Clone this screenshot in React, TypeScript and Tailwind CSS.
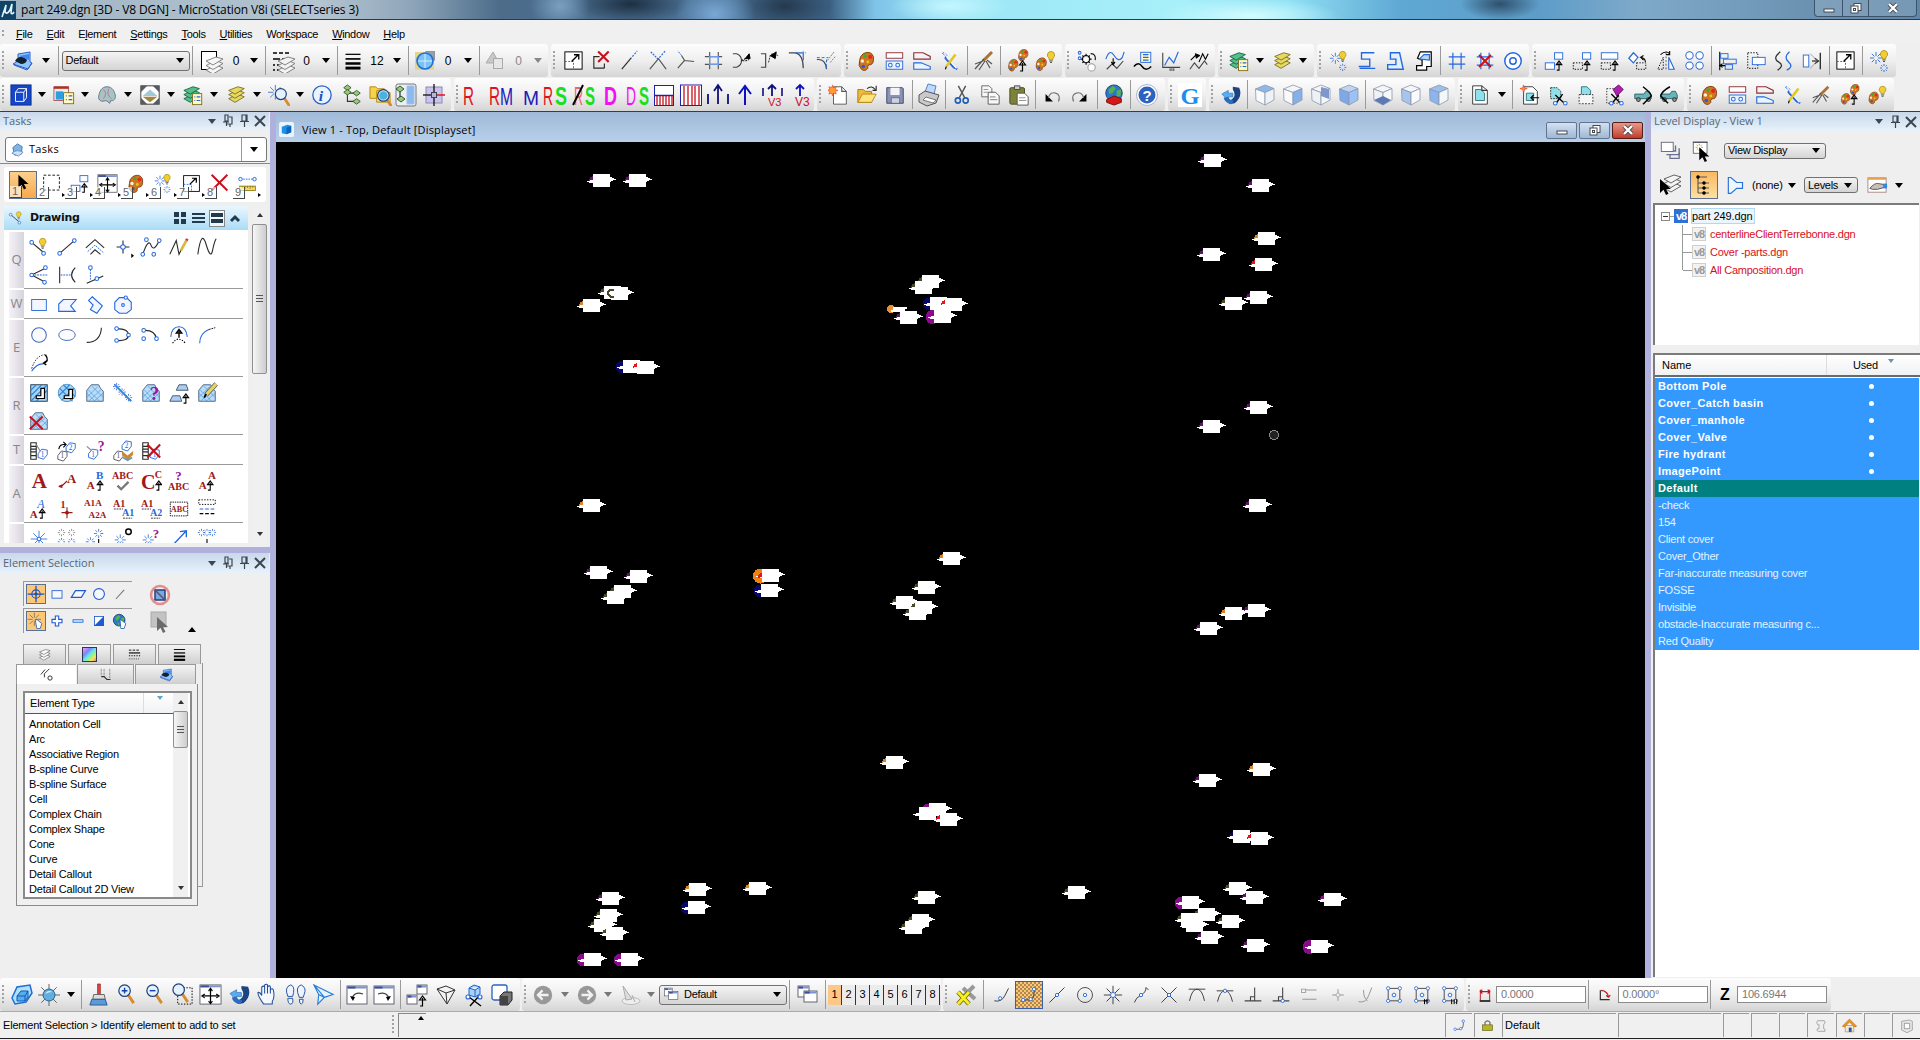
import React from "react";

const K = "#2b2b2b";
const B = "#2468dc";
const R = "#c8101c";
const N = "#000";
const Y = "#e8d860";

const l = (d: string, c = K, w = 1.2, f = "none", dash?: string) => (
  <path d={d} stroke={c} strokeWidth={w} fill={f} strokeDasharray={dash} />
);
const o = (x: number, y: number, r = 2, c = B, f = "#fff", w = 1.1) => (
  <circle cx={x} cy={y} r={r} stroke={c} fill={f} strokeWidth={w} />
);
const t = (s: string, x: number, y: number, c: string, size = 9, family = "Liberation Serif", w = "bold") => (
  <text x={x} y={y} fill={c} fontSize={size} fontFamily={`"${family}", serif`} fontWeight={w}>
    {s}
  </text>
);
const tall = (s: string, x: number, w: number, c: string, weight = "normal", size = 25) => (
  <text x={x} y="21.500" fill={c} fontSize={size} fontWeight={weight} fontFamily='"Liberation Sans", sans-serif' textLength={w} lengthAdjust="spacingAndGlyphs">
    {s}
  </text>
);

const bulb = (x: number, y: number) => (
  <g transform={`translate(${x} ${y})`}>
    <path d="M0-4.5a3.6 3.6 0 0 1 2 6.6L1.6 4h-3.2L-2 2.1A3.6 3.6 0 0 1 0-4.5z" fill="#f2cf2e" stroke="#a58a1c" strokeWidth=".8" />
    <path d="M-1.6 5h3.2M-1 6.5h2" stroke="#555" />
  </g>
);
const paint = (x: number, y: number, s = 1) => (
  <g transform={`translate(${x} ${y}) scale(${s})`}>
    <path d="M-3-8Q5-12 8-5 9 3 5 4 1 4 2 8-1 12-5 9-9 5-7 0-7-5-3-8z" fill="#cf7420" stroke="#7c3c0c" />
    <circle cx="-4" cy="0" r="1.900" fill="#fff3d8" />
    <circle cx="-1" cy="-5.500" r="1.900" fill="#35b035" />
    <circle cx="4.500" cy="-4.500" r="2.200" fill="#e22a1c" />
    <circle cx="-3" cy="6" r="2" fill="#2f58d8" />
    <circle cx="2" cy="1" r="1.600" fill="#e9c520" />
  </g>
);
const burst = (x: number, y: number, r = 6, c = B, w = 0.9) => (
  <path
    transform={`translate(${x} ${y})`}
    d={`M0-${r}V-2M0 2V${r}M-${r} 0H-2M2 0H${r}M-${r * 0.7}-${r * 0.7}L-1.500-1.500M${r * 0.7} ${r * 0.7}L1.500 1.500M${r * 0.7}-${r * 0.7}L1.500-1.500M-${r * 0.7} ${r * 0.7}L-1.500 1.500`}
    stroke={c}
    strokeWidth={w}
  />
);
const pages = (x: number, y: number, c: string, s = "#6b6420") => (
  <g transform={`translate(${x} ${y})`} stroke={s} fill={c} strokeWidth=".9">
    <path d="M0 13l7 4 10-6-7-3z" />
    <path d="M0 8.500l7 4 10-6-7-3z" />
    <path d="M0 4l7 4L17 2 10 0z" />
  </g>
);
const redX = (x: number, y: number, r = 6) => l(`M${x - r} ${y - r}L${x + r} ${y + r}M${x + r} ${y - r}L${x - r} ${y + r}`, R, 2.2);
const cube = (a: string, b: string, c: string) => (
  <g stroke="#8b97a8" strokeWidth=".8">
    <path d="M2.500 6L12 2l9 3.500-9 4z" fill={a} />
    <path d="M2.500 6L12 9.500V22L3 17.500z" fill={b} />
    <path d="M12 9.500l9-4V17l-9 5z" fill={c} />
  </g>
);
const hatch = (
  <>
    <path d="M3 21V9l5-6h8l2 4 3 3v11z" fill="#b9dcf7" stroke="#46617e" />
    <path d="M3 12l9 9M4 8l13 13M8 4l13 13M3 17l12-12M5 21L19 8M11 21l10-9" stroke="#4d93da" strokeWidth=".7" />
  </>
);
const cursor = (x: number, y: number, c = N) => (
  <path transform={`translate(${x} ${y})`} d="M0 0v14l3.500-3.200L6 16l2.500-1.200L6 10h5z" fill={c} />
);
const win = (x: number, y: number, w: number, h: number) => (
  <g>
    <rect x={x} y={y} width={w} height={h} fill="#fff" stroke="#556" strokeWidth=".9" />
    <rect x={x + 0.5} y={y + 0.5} width={w - 1} height="2" fill="#7f92cc" />
    <rect x={x + 0.5} y={y + 0.5} width={w * 0.4} height="2" fill="#3c4f94" />
  </g>
);
const lens = (x: number, y: number, s: string) => (
  <g transform={`translate(${x} ${y})`}>
    <path d="M3.500 4l6 9" stroke="#d98a2b" strokeWidth="3" />
    <circle r="6" fill="#e4f2ff" stroke="#23407c" strokeWidth="1.300" />
    <path d={s} stroke="#1240b0" strokeWidth="1.500" />
  </g>
);
const box = (x: number, y: number, w: number, h: number, c = B, dash?: string, f = "none") => (
  <rect x={x} y={y} width={w} height={h} stroke={c} fill={f} strokeDasharray={dash} />
);
const upArrow = (x: number, y: number) => (
  <path transform={`translate(${x} ${y})`} d="M-3 9h2.500V1M-3.500 3l3-4 3 4z" stroke={N} strokeWidth="1.200" fill="none" />
);
const globe = (x: number, y: number, r: number) => (
  <g>
    <circle cx={x} cy={y} r={r} fill="#2a78cc" stroke="#1d3f70" />
    <path transform={`translate(${x} ${y}) scale(${r / 9})`} d="M-6-4L-1-8l3 3-4 5-3 1zM3-3l5-1-1 7-4 1zM-3 3l4 2-2 4z" fill="#55b14a" />
  </g>
);
const tag = (x: number, y: number, c: string, s: string) => (
  <g transform={`translate(${x} ${y})`}>
    <path d="M-5 0l4-5 6 1v5l-4 5-6-2z" fill="#fff" stroke={c} />
    <text x="-2" y="3" fontSize="8" fill={c} fontFamily="Liberation Serif">{s}</text>
  </g>
);
const truck = (
  <>
    <path d="M3 11h10l2-3h4l2 4v4H3z" fill="#67b5b8" stroke="#28656c" />
    {o(7, 17, 2, "#333", "#999")}
    {o(18, 17, 2, "#333", "#999")}
  </>
);
const snapBox = (
  <>
    {box(5, 4, 14, 15, "#333")}
    {[5, 19].map((x) => [4, 19].map((y) => <circle key={`${x}-${y}`} cx={x} cy={y} r="2" fill="#fff" stroke={B} />))}
    {o(12, 12, 2.2)}
  </>
);

const RED = "#e01020", NAVY = "#1a1ab8", LIME = "#18e020", PINK = "#f010f0";

const icons: Record<string, React.ReactNode> = {
  gR: tall("R", 6, 11, RED),
  gRM: (<>{tall("R", 0, 11, RED)}{tall("M", 11, 13, NAVY, "normal", 24)}</>),
  gM: tall("M", 4, 16, NAVY, "normal", 20),
  gRS: (<>{tall("R", 0, 10, RED)}{tall("S", 12, 12, LIME, "bold")}</>),
  gRxS: (<>{tall("R", 2, 9, "#f06070")}{tall("S", 13, 10, LIME, "bold")}{l("M1 22L11 2", N, 2)}</>),
  gD: tall("D", 6, 13, PINK, "bold"),
  gDS: (<>{tall("D", 0, 10, PINK)}{tall("S", 13, 10, LIME, "bold")}</>),
  level: (<><path d="M3 15l15 5 4-6-2-1V3L8 5v7z" fill="#8fc4ff" stroke="#2860c8" /><path d="M4 16l13 5 5-7" stroke="#2860c8" fill="none" /><path d="M5 12q3-5 9-4l3 3q-1 4-6 4z" fill="#123" /><path d="M9 7l10-2v6z" fill="#3f86f0" /></>),
  levelBox: (<>{box(2.5, 2.500, 15, 18, N, undefined, "#fff")}{pages(7, 8, "#f6f6f6", "#777")}</>),
  lineStyle: (<>{l("M2 4h18", N, 1.4, "none", "4 2")}{l("M2 10h18", N, 1.4, "none", "7 2")}{l("M2 16h8M2 21h10", N, 1.4, "none", "2 2")}{pages(7, 8, "#f2f2f2", "#777")}</>),
  weight: (<>{l("M3 4h18", N, 1.5)}{l("M3 9.500h18", N, 2)}{l("M3 15h18", N, 3)}{l("M3 20.500h18", N, 3.500)}</>),
  color: (<><rect x="2" y="3" width="19" height="18" fill="#e6d488" /><path d="M12 2h10v10z" fill="#8d939b" /><path d="M12 3h9v9z" fill="#9aa0a8" /><circle cx="12" cy="12" r="8" fill="#78c2f8" stroke="#2070d8" strokeWidth="1.600" /><path d="M12 5v14M5 12h14" stroke="#d6efff" /></>),
  prio: (<><path d="M3 14L10 3l6 11z" fill="#c9c9c9" stroke="#aaa" />{box(10.5, 9.500, 9, 10, "#aaa", undefined, "#e6e6e6")}</>),
  scale: (<>{box(3, 3, 18, 18, N, undefined, "#fff")}{l("M3 13h9v8", B, 1, "none", "2 1.500")}{l("M10 13l7-7M12.500 6h5v5", N, 1.400)}</>),
  delPart: (<>{l("M15 20H4V8h6M15 20v-5", K)}{redX(14, 8, 5.5)}</>),
  extend: (<>{l("M4 21L14 9", K)}{l("M15 8l5-6", B, 1.2, "none", "2 1.500")}</>),
  trimX: (<>{l("M4 21L13 10l8 11", "#555")}{l("M14 9l6-7", B, 1.3, "none", "2 1.500")}{l("M5 3l8 8", B, 1.2, "none", "2 1")}</>),
  interT: (<>{l("M4 20L11 12 8 7M11 12l10 1", "#555")}{l("M8 7L4 2", B, 1, "none", "2 1")}</>),
  hash: (<>{l("M8 3v18M17 3v18", "#555")}{l("M3 8h18M3 16h18", "#555")}{l("M8 8h9v8H8z", "#6f9ce8")}</>),
  filletR: (<>{l("M3 5h4q5 2 5 7t-5 7H3", "#444")}{l("M12 12q4-1 8-6M13 12q3 1 7-1", K, 1.2, "none", "2 1")}{l("M20 5l-4 5h5z", N, 1, N)}</>),
  filletL: (<>{l("M3 5h5v14H3", "#444")}{l("M11 14l2-8q3-2 8 1", K, 1, "none", "2 1")}{l("M19 3l-6 4 5 3z", N, 1, N)}</>),
  curveA: (<>{l("M3 4h7q8 2 8 16", "#444")}{l("M10 4h8v8", B)}{l("M18 2v2h4", "#888", 1, "none", "1 1")}</>),
  curveB: (<>{l("M3 11q9-1 10 10", "#444")}{l("M13 11v10M3 9h12", B, 1, "none", "3 2")}{l("M14 12l7-9M17 14l5-6", "#777", 1, "none", "2 1")}</>),
  palette: paint(12, 12),
  match1: (<>{box(3.5, 3, 18, 6, "#8b2d36", undefined, "#fff")}{box(3.5, 12, 18, 9, B, undefined, "#eaf4ff")}{o(8, 16.5)}{o(16, 16.500)}</>),
  match2: (<>{l("M3 9V3h10l8 4v3H3z", "#8b2d36")}{l("M3 21v-7h8l10 4v3z", B, 1.2, "#eaf4ff")}</>),
  match3: (<>{l("M4 3l4 3-1 3 9 10 4 2", B, 2)}{l("M5 3l14 17", "#eaf4ff", 1.5)}{l("M18 5L8 18", "#e5c61c", 2.800)}{l("M8 18l-1 3", N)}</>),
  brush: (<>{l("M20 3l-9 9", "#a97336", 3)}{l("M12 10L3 20M13 12l-6 9M14 12l4 7M11 12l-8 3M15 11l5 4", "#555", 1.200)}</>),
  palettes: (<>{paint(7, 16, 0.6)}{paint(17, 6, 0.6)}{upArrow(17, 13)}</>),
  paletteBulb: (<>{paint(7, 15, 0.65)}{bulb(17, 7)}</>),
  sm1: (<>{o(11, 10, 4, N)}{l("M11 4v3M11 13v3M5 10h3M14 10h3M7 6l2 2M13 12l2 2M15 6l-2 2M9 12l-2 2", N)}{o(17, 19, 4, "#999")}{o(4, 3, 1.5)}{o(4, 9, 1.5)}{l("M16 4q6 0 5 7", N)}</>),
  sm2: (<>{l("M2 10Q6-2 11 6t9 2l2-6", B)}{l("M3 21l6-6 5 5 7-8", "#444")}{l("M10 9v6M8 13l2 3 2-3", N)}</>),
  sm3: (<>{box(9.5, 2.500, 11, 11, B, undefined, "#fff7c8")}{l("M12 5h6M12 8h6M12 11h6", B)}{l("M2 18q5-6 9 0t10 0", N, 1.500)}</>),
  sm4: (<>{l("M3 3v16h19", "#444")}{l("M5 17l5-9 5 6 5-12", B)}{l("M11 20v3M13 20v3M15 20v3", "#555")}</>),
  sm5: (<>{l("M2 21l5-7 5 6 6-8 3 4", "#444")}{l("M3 11l5-5h4M12 13l4-9 3 6 3-6", N)}{l("M8 4l5 2-4 3z", N, 1, N)}</>),
  mgr: (<>{pages(2, 3, "#52c08a", "#145838")}{box(11.5, 10.500, 10, 12, "#806d20", undefined, "#fff8c0")}{l("M13.500 14h1M16 14h4M13.500 18h1M16 18h4", B)}</>),
  yPages: pages(4, 3, Y),
  star: (<>{burst(8, 9, 6)}{bulb(16, 6)}{burst(16, 19, 4)}</>),
  shp1: l("M20 3H6v7h9v8H3M4 20h17", B, 1.5),
  shp2: l("M7 3h10l4 18H4v-5h9v-6H7z", B, 1.5, "#e2efff"),
  shp3: (<>{l("M9 2h12v16h-5v4H5v-5h6v-6L6 9z", N, 1.3, "#fff")}{l("M8 10l5-5h6v6z", B, 1.2, "#b8d8f8")}</>),
  grid: l("M3 7.500h18M3 15.500h18M7.500 3v18M16.500 3v18", B, 1.300),
  gridX: (<>{l("M3 7.500h18M3 16.500h18M7.500 3v18M16.500 3v18", B, 1.300)}{redX(12, 12, 6.5)}</>),
  target: (<>{o(12, 12, 9, B, "#fff", 1.6)}{o(12, 12, 3.5, B, "#fff", 1.600)}</>),
  copyE: (<>{box(12.5, 3, 9, 7, B, undefined, "#fff")}{box(2.5, 14, 10, 7, B, undefined, "#fff")}{upArrow(18, 13)}</>),
  moveE: (<>{box(12.5, 3, 9, 7, B, undefined, "#fff")}{box(2.5, 14, 10, 7, N, "1.500 1.500")}{upArrow(18, 13)}</>),
  scaleE: (<>{box(2.5, 3, 18, 7, B, undefined, "#fff")}{box(2.5, 14, 10, 7, N, "1.500 1.500")}{upArrow(18, 13)}</>),
  rotE: (<>{l("M2 9l5-6 5 5-5 6z", B, 1.3, "#fff")}{box(10.5, 14, 10, 7, N, "1.500 1.500")}{l("M20 13q0-4-5-5l3-2M15 8l3 3", N)}</>),
  mirror: (<>{l("M9 8L3 21h6z", N, 1, "none", "1.500 1.500")}{l("M15 8v13h6z", B, 1.2, "#fff")}{l("M12 3v19", "#555", 1, "none", "2 2")}{l("M6 5q6-5 10-1M16 1v4h-4", N)}</>),
  array: (<>{o(6, 6, 4)}{o(17, 6, 4)}{o(6, 17, 4)}{o(17, 17, 4)}</>),
  align: (<>{l("M3 2v20", N)}{box(4, 4, 8, 5, B)}{box(7, 10, 14, 5, B)}{box(9, 16, 8, 5, B)}{l("M4 17h5M6 15l-3 2 3 2", N)}</>),
  alignEdge: (<>{box(3, 3, 11, 17, N, "1.500 1.500")}{box(8, 8, 14, 8, B, undefined, "#fff")}</>),
  offset: (<>{l("M8 2Q-1 9 6 13t-1 9", "#333", 1.4)}{l("M18 2q-7 6-1 11t-2 9", B, 1.400)}</>),
  stretch: (<>{box(2.5, 5.500, 6, 13, B, undefined, "#fff")}{l("M12 12h6M15 9l4 3-4 3M21 3v18", N)}{l("M10 4l8 8-8 8", "#999", 1)}</>),
  cubeBtn: (<><rect x="1" y="1" width="22" height="22" fill="#1646c8" stroke="#0a2b90" /><path d="M6 9l3-4h9v10l-3 4H6zM6 9h9v10M15 9l3-4" stroke="#fff" fill="none" /></>),
  prefs: (<><rect x="1" y="3" width="16" height="15" fill="#eee" stroke="#a55" />{l("M1 4h16", "#b03020", 2.500)}<path d="M3 8h8v9H3z" fill="#2d9fe0" />{box(11.500, 9.500, 11, 12, "#806d20", undefined, "#fff8c0")}{l("M14 13h1M17 13h4M14 17h1M17 17h4", B)}</>),
  brain: (<><path d="M12 3c6 0 8 5 9 9s-2 7-5 6l-1 3-4-3c-5 2-9 0-8-5S6 3 12 3z" fill="#a8c4c0" stroke="#61708a" /><path d="M8 6q5 4 0 10M14 5q-3 7 3 11" stroke="#b76fab" fill="none" /></>),
  raster: (<><rect x="2" y="2" width="20" height="20" fill="#fff" stroke="#333" /><path d="M2 2h7l-7 7zM22 2h-7l7 7zM22 22h-7l7-7zM2 22h7l-7-7z" fill="#555b60" /><path d="M4 13l8-7 8 7z" fill="#9fcbd8" /><path d="M4 14h16l-8 6z" fill="#a5853c" /></>),
  acc: (<>{burst(8, 9, 8)}{lens(14, 11, "")}</>),
  info: (<><circle cx="12" cy="12" r="10" fill="#eaf3ff" stroke="#2a62c8" strokeWidth="1.400" /><text x="8.500" y="18" fontSize="17" fontStyle="italic" fontWeight="bold" fill="#1a50c0" fontFamily="Liberation Serif">i</text></>),
  tree: (<>{l("M7 6v13h8M7 10h9", "#333")}{[[7, 4], [17, 10], [17, 19], [7, 9]].map(([x, y]) => <path key={x + "" + y} d={`M${x - 4} ${y}l4-3 4 3-4 3z`} fill="#9ac87a" stroke="#365a2a" />)}</>),
  folders: (<><path d="M1 4h6l2 2h7v10H1z" fill="#f7d24c" stroke="#b58a14" /><path d="M8 8h5l2 2h7v10H8z" fill="#f9dc6c" stroke="#b58a14" />{lens(15, 13, "")}<circle cx="15" cy="13" r="4.500" fill="#47b4e0" /></>),
  cells: (<><rect x="2" y="1" width="20" height="22" rx="2" fill="#e8f0f6" stroke="#777" /><path d="M2 6l4-3 4 3-4 3zM3 16l4-3 4 3-4 3z" fill="#9ac87a" stroke="#365a2a" />{l("M6 9v5", "#333")}<path d="M13 3h7v18h-7z" fill="#8db9ef" stroke="#a5c0e4" /></>),
  cross: (<><rect x="4" y="4" width="16" height="16" fill="#c9c4ec" stroke="#8b87ba" />{l("M12 1v22", N)}{l("M1 12h11", N)}{l("M12 12h11", "#e01020", 1.500)}<rect x="9.500" y="9.500" width="5" height="5" fill="#b9b3e3" stroke="#444" /></>),
  barBoxR: (<>{box(2.5, 2.500, 19, 20, "#2020b0", undefined, "#fff")}{l("M2.500 12.500h19", "#2020b0", 1.500)}{l("M5 13v9M8 13v9M11 13v9M14 13v9M17 13v9M20 13v9", R, 1.300)}</>),
  barBox: (<>{box(1.5, 2, 21, 20.500, "#2020b0", undefined, "#fff")}{l("M5 3v19M9 3v19M13 3v19M16 3v19M20 3v19", R, 1.300)}</>),
  upBars: (<>{l("M12 21V3M8 8l4-6 4 6", "#10107a", 1.800)}{l("M2 11v10M22 11v10", "#10107a", 1.800)}</>),
  upOne: l("M12 22V4M6 11l6-8 6 8", "#1010c0", 2),
  upV3: (<>{l("M12 13V2M8 6l4-4 4 4", "#10107a", 1.8)}{l("M3 5v8M22 5v8", "#10107a", 1.600)}{t("V3", 8, 23, R, 11, "Liberation Sans", "normal")}</>),
  up1V3: (<>{l("M12 13V2M8 6l4-4 4 4", "#1010c0", 1.8)}{t("V3", 7, 23, R, 12, "Liberation Sans", "normal")}</>),
  newF: (<><path d="M6 3h9l5 5v14H6z" fill="#fff" stroke="#555" />{l("M15 3v5h5", "#555")}<path d="M5 1l1 3 3-1-1 3 3 1-3 1 1 3-3-1-1 3-1-3-3 1 1-3-3-1 3-1-1-3 3 1z" fill="#ff9c38" stroke="#d33" strokeWidth=".6" /></>),
  open: (<><path d="M2 6h6l2 2h7v12H2z" fill="#f0b93c" stroke="#a87713" /><path d="M2 20l5-9h15l-5 9z" fill="#ffe37c" stroke="#b5861c" />{l("M12 5q5-4 9 1M22 2v5h-4", K)}</>),
  save: (<><path d="M3 4h17l1 1v16H3z" fill="#8a93b5" stroke="#3d4563" /><path d="M7 4h10v8H7z" fill="#f2f4fa" /><path d="M8 15h9v6H8z" fill="#cdd2e2" stroke="#3d4563" strokeWidth=".6" /></>),
  print: (<><path d="M8 9l3-8 8 2-2 8z" fill="#bcd9ff" stroke="#5d82b5" /><path d="M2 12l6-4 14 4-3 8-9 3-8-4z" fill="#c9c9c9" stroke="#555" /><path d="M6 17l10 3 3-3-10-3z" fill="#fff" stroke="#777" /></>),
  cut: (<>{l("M8 2l7 13M16 2L9 15", "#555", 1.600)}{o(7.500, 18, 2.8, "#1f5fb8", "none", 1.800)}{o(16, 18, 2.8, "#1f5fb8", "none", 1.800)}</>),
  copy: (<><path d="M3 2h8l3 3v9H3z" fill="#f8f8f8" stroke="#666" /><path d="M10 9h8l4 4v9H10z" fill="#f8f8f8" stroke="#555" />{l("M5 6h5M5 9h5M12 14h6M12 17h8", "#999")}</>),
  paste: (<><rect x="2" y="4" width="16" height="18" rx="1.500" fill="#7d8238" stroke="#454a1c" /><path d="M7 2h6v4H7z" fill="#ccc" stroke="#444" /><path d="M10 10h8l4 4v9H10z" fill="#fff" stroke="#555" />{l("M12 15h7M12 18h8", "#999")}</>),
  undo: (<><path d="M5 11v8h8z" fill={N} />{l("M8 15q2-7 8-5t3 9", "#777", 1.300)}</>),
  redo: (<><path d="M19 11v8h-8z" fill={N} />{l("M16 15q-2-7-8-5t-3 9", "#777", 1.300)}</>),
  globeBook: (<>{globe(12, 10, 9)}<path d="M4 17l8-4 8 3v4l-8 3-8-3z" fill="#d41818" stroke="#7a0808" /></>),
  help: (<><circle cx="12" cy="12" r="10.500" fill="#fff" stroke="#a9b6c8" /><circle cx="12" cy="12" r="8.500" fill="#2e62c0" /><text x="7.600" y="17.500" fontSize="15" fontWeight="bold" fill="#fff" fontFamily="Liberation Sans">?</text></>),
  google: (<><rect x="0" y="0" width="24" height="24" fill="#fff" /><text x="2.500" y="20.500" fontSize="24" fontWeight="bold" fill="#1b8df0" fontFamily="Liberation Serif" textLength="19" lengthAdjust="spacingAndGlyphs">G</text></>),
  rotV: (<><path d="M14 3l7 1q4 10-5 17l-6 1 1-4q8-4 3-12z" fill="#1c4482" /><path d="M2 11l7-4v3h5v4H9v4z" fill="#58aef0" stroke="#2a70b8" strokeWidth=".7" /><path d="M4 15q1 6 9 7l2-4q-5 0-6-4z" fill="#2e6cc0" /></>),
  cu1: cube("#8fb8ea", "#f8fafc", "#eef2f6"),
  cu2: cube("#f4f6f9", "#f8fafc", "#86b0ec"),
  cu3: (<>{cube("#f4f6f9", "#eef2f6", "#f6f8fa")}<path d="M12 4l8 2v10l-8-3z" fill="#8097cc" /></>),
  cu4: cube("#bdd4f3", "#7da8ea", "#9cc1f4"),
  cu5: (<>{cube("#f4f6f9", "#eef2f6", "#f6f8fa")}<path d="M3 17l9-4 8 4-8 5z" fill="#5e78b4" /></>),
  cu6: cube("#f4f6f9", "#a6c4ee", "#f8fafc"),
  cu7: cube("#9bbfee", "#8db4ec", "#f4f7fa"),
  page: (<><path d="M4 2h10l6 5v15H4z" fill="#fff" stroke="#333" /><path d="M7 6h6l4 4v8H7z" fill="#8fe0e8" stroke="#2c7480" />{l("M14 2v5h6", "#333")}</>),
  pageAdd: (<><path d="M5 3h10l5 5v14H5z" fill="#fff" stroke="#333" /><path d="M8 10h8v8H8z" fill="#8fe0e8" stroke="#2c7480" />{l("M22 15h-8M16 12l-3 3 3 3", N, 1.300)}<path d="M5 1l1 3 3 1-3 1-1 4-1-4-3-1 3-1z" fill="#ff8c38" stroke="#d33" strokeWidth=".6" /></>),
  pageCut: (<><path d="M4 4h7l4 4v8H4z" fill="#8fe0e8" stroke="#333" strokeDasharray="2 1" />{l("M9 12l10 9M17 11l-7 10", N, 1.5)}{o(9, 21, 2, B)}{o(20, 21, 2, B)}</>),
  pageClip: (<><path d="M7 3h6l4 4v5H7z" fill="#8fe0e8" stroke="#2c7480" />{box(4.5, 11.500, 15, 10, "#333", "2 1.500", "#f6f6f6")}</>),
  pageMag: (<>{box(3, 5, 13, 16, "#333", "1.500 1.500")}<path d="M10 6l6-5 5 5-7 7z" fill="#b020b0" stroke="#650a65" />{l("M8 11l10 10M16 12l-7 9", N, 1.5)}{o(8, 21, 2)}{o(19, 21, 2)}</>),
  tr1: (<>{truck}{l("M12 3q8 6 9 10l-9 9", N, 1.600)}</>),
  tr2: (<>{truck}{l("M13 3q-9 5-10 10l8 8", N, 1.600)}</>),
  viewAttr: (<><path d="M2 15L7 4l13-2 2 8-6 9-11 2z" fill="#aee0ff" stroke="#1f6fd0" strokeWidth="1.500" /><path d="M7 13l4-5h7v6l-3 4H7z" fill="#56aef2" stroke="#1558b0" /><path d="M7 13h8v5M15 13l3-5" stroke="#1558b0" fill="none" /></>),
  bright: (<>{burst(12, 12, 11, "#555")}<circle cx="12" cy="12" r="6" fill="#62aede" stroke="#2a6592" /><path d="M8 11q3-5 7-2-4 0-7 2z" fill="#dff3ff" /></>),
  upd: (<><path d="M11 1h3v11h-3z" fill="#d44" stroke="#811" strokeWidth=".6" /><path d="M7 12h11l1 5H6z" fill="#ddd" stroke="#666" /><path d="M5 17h14l2 6H3z" fill="#5b9ad8" stroke="#2a5b92" /></>),
  zin: lens(10, 8, "M-3 0h6M0-3v6"),
  zout: lens(10, 8, "M-3 0h6"),
  zwin: (<>{box(7, 5, 15, 17, N, "1.500 1.500")}{lens(8, 7, "")}</>),
  fit: (<>{win(1, 2, 22, 20)}{l("M12 6v15M4 13.500h16", N, 1.300)}{l("M10 8.500l2-3 2 3M10 19l2 2.500 2-2.500M6 11.500l-3 2 3 2M18 11.500l3 2-3 2", N)}</>),
  pan: <path d="M8 22q-6-8-6-12 2-1 4 3V4q2-1.500 3 0V2q2-1.500 3 0v2q2-2 3 0v3q2-2 3 0 2 8-1 12v3zM9 4v7M12 3v8M15 5v6" fill="#f4f8ff" stroke="#24509c" strokeWidth="1.100" />,
  walk: (<><path d="M7 2q4 1 3 8l-1 4H4Q0 4 7 2zM4 16h5q1 6-2 6t-3-6zM18 2q6 3 3 10l-1 3h-4q-5-11 2-13zM16 17h4q0 5-2 5t-2-5z" fill="#eef4ff" stroke="#24509c" /></>),
  fly: (<path d="M2 2l20 10-9 3-7 7 1-10zM2 2l11 13M7 12l6 3" fill="#e6f3ff" stroke="#2680d8" strokeWidth="1.200" />),
  vprev: (<>{win(2, 3, 20, 18)}{l("M7 16q2-8 11-5", "#444")}<path d="M5 13l3 5 2-4z" fill={N} /></>),
  vnext: (<>{win(2, 3, 20, 18)}{l("M17 16q-2-8-11-5", "#444")}<path d="M19 13l-3 5-2-4z" fill={N} /></>),
  copyV: (<>{win(12, 2, 10, 9)}{win(2, 12, 10, 9)}{upArrow(18, 14)}</>),
  persp: (<path d="M3 6l9-3 9 4-8 14zM3 6l9 4 9-3M12 10l1 11" fill="#f4f4f4" stroke="#333" />),
  clip: (<><path d="M7 5l5-3 6 2v7l-5 3-6-2zM7 5l6 2 5-3M13 7v7" fill="#a6d0fa" stroke="#1f66c8" />{l("M7 14l12 9M17 13L8 23", N, 1.4)}{o(6, 14, 2)}{o(18, 14, 2)}</>),
  clipM: (<><rect x="2" y="2" width="15" height="15" rx="2" fill="#fff" stroke="#2a62c0" strokeWidth="1.300" /><path d="M10 13l4-4h8v8l-4 5h-8z" fill="#777" stroke="#222" /><path d="M10 13h8v9h-8z" fill="#444" /></>),
  back: (<><circle cx="12" cy="12" r="10" fill="#989898" />{l("M18 12H7M11.500 7L6.500 12l5 5", "#f2f2f2", 2.500)}</>),
  fwd: (<><circle cx="12" cy="12" r="10" fill="#989898" />{l("M6 12h11M12.500 7l5 5-5 5", "#f2f2f2", 2.500)}</>),
  cone: (<><ellipse cx="13" cy="18" rx="9" ry="3.500" fill="#eee" stroke="#bbb" /><path d="M5 3l3 14 6-1zM14 12l3 7" fill="#ddd" stroke="#aaa" /></>),
  views: (<>{win(2, 3, 11, 11)}{win(8, 8, 13, 11)}</>),
  yx: (<>{l("M9 5l12 11M20 3L10 13", "#999", 4)}{l("M4 9l11 12M15 9L4 21", "#6b6600", 4.600)}{l("M4 9l11 12M15 9L4 21", "#f7ee20", 3)}</>),
  sn1: (<>{l("M4 19q9 2 13-7l4-8", "#444")}{o(11, 16)}</>),
  sn2: (<>{l("M5 18h9q5-2 4-13", "#444")}{o(5, 18)}{o(14, 17)}{o(18, 5)}</>),
  sn3: (<>{l("M3 21L21 3", "#444")}{o(12, 12)}</>),
  sn4: (<>{o(12, 12, 9, "#444", "none")}{o(12, 12)}</>),
  sn5: (<>{burst(12, 12, 11, "#444", 1.2)}{o(12, 12, 3)}</>),
  sn6: (<>{l("M4 21q2-6 8-9t6-9l3 3", "#444")}{o(12, 12)}</>),
  sn7: (<>{l("M3 3l18 18M21 3L3 21", "#444")}{o(12, 12)}</>),
  sn8: l("M2 5h20M3 19Q6 5 12 5t9 14", "#444"),
  sn9: (<>{l("M2 7h20M3 20Q6 7 12 7t9 13", "#444")}{o(12, 7)}</>),
  sn10: (<>{l("M2 19h20M14 3v16M9 19v-5h5", "#444", 1.300)}</>),
  sn11: (<>{l("M2 19h20M14 3v16M9 19v-5h5", "#444", 1.3)}{o(14, 19)}</>),
  sn12: (<>{l("M8 6h13M4 17h17", "#999", 1.3)}{box(3, 5, 5, 4, "#999")}</>),
  sn13: l("M12 5v4M12 15v4M5 12h4M15 12h4M9 12l3-3 3 3-3 3z", "#999"),
  sn14: l("M3 20q9 2 12-7l4-10M9 6q0 10 5 13", "#999"),
  sn15: snapBox,
  sn16: (<>{snapBox}{l("M14 19h6M15 17v6M18 17v6", N)}</>),
  sn17: (<>{snapBox}{l("M14 17v6M17 17v6M20 17v6", N)}</>),
  axX: (<>{l("M5 4v16M19 4v16", R, 1.4)}{l("M5 7h14M8 4L5 7l3 3M16 4l3 3-3 3", R, 1.800)}{l("M4 21h16", N, 2.200)}</>),
  axA: (<>{l("M4 4v16h16", K, 2)}{l("M5 4q12 1 13 12M18 16l-4-3M18 16l3-4", R, 2)}</>),
  arrowSel: cursor(7, 3),
  fence: box(3, 2.5, 18, 17, N, "3 2"),
  pl1: (<>{l("M4 7l13 11", K)}{o(4, 7)}{o(17, 19)}{bulb(16, 7)}</>),
  pl2: (<>{l("M4 19L20 5", K)}{o(4, 19)}{o(20, 5)}</>),
  pl3: (<>{l("M2 13L12 4l10 9M7 20l5-5 6 5", K)}{l("M4 17l8-7 9 8", B, 1, "none", "2 1")}</>),
  pl4: (<>{l("M12 5v14M5 12h14", K)}{o(12, 12, 2.5)}<path d="M21 19l3 2.500-3 2.500z" fill={N} /></>),
  pl5: (<>{l("M3 20Q9 2 12 10t9-5", K)}{o(3, 20)}{o(7, 4)}{o(15, 20)}{o(21, 5)}</>),
  pl6: (<>{l("M2 20L9 5l3 15 5-10", K)}{l("M20 5l-6 11", "#d8b840", 3)}{l("M20 5l1-2", "#d33", 3)}</>),
  pl7: l("M2 20Q6-8 11 9t7 7 4-13", K),
  pl8: (<>{l("M20 4L4 12l15 8", K)}{l("M4 12h18", B, 1.2, "none", "2 1")}{o(19, 4)}{o(4, 12)}{o(18, 20)}</>),
  pl9: (<>{l("M4 3v18M21 4q-8 8 0 16", K)}{l("M5 12h12", B, 1.2, "none", "2 1")}</>),
  pl10: (<>{l("M3 21l18-8", K)}{l("M7 6v12", B, 1, "none", "2 1")}{o(7, 4)}{o(14, 16)}</>),
  po1: box(4, 6, 16, 12, B, undefined, "#f3f6ff"),
  po2: l("M3 19v-8l5-5h14l-6 7 5 6z", B, 1.2, "#f3f6ff"),
  po3: l("M9 3l11 10-6 8-7-4 3-5-5-5z", B, 1.2, "#f3f6ff"),
  po4: (<>{l("M8 4h8l5 5v8l-5 4H8l-5-4V9z", B, 1.2, "#f3f6ff")}{o(12, 12, 1.5)}{o(15, 4, 1.8)}</>),
  ci1: o(12, 12, 8, "#4565c0", "#fafbff"),
  ci2: <ellipse cx="12" cy="12" rx="9" ry="6" fill="#fafbff" stroke="#4565c0" />,
  ci3: l("M3 20Q18 20 19 4", K),
  ci4: (<>{l("M5 5q13 0 13 7T5 18", K)}{o(5, 5)}{o(18, 12)}{o(5, 18)}</>),
  ci5: (<>{l("M4 7q12-1 14 9", K)}{o(4, 7)}{o(4, 16)}{o(18, 16)}</>),
  ci6: (<>{l("M3 14Q4 3 12 3t9 11", B)}{l("M12 15V8M9 10l3-4 3 4z", N, 1.5)}{l("M5 21q6-9 14 0", N, 1.2, "none", "1.500 1.500")}</>),
  ci7: (<>{l("M4 21Q4 10 14 6", B)}{l("M14 6l7-2", N, 1, "none", "2 1")}</>),
  ci8: (<>{l("M4 21q6-9 13-8", B)}{l("M4 18Q9 3 19 3", N, 1, "none", "1.500 1.500")}{l("M19 3q5 7-2 9M20 10l-3 2 3 2", N, 1.500)}</>),
  ha1: (<><rect x="3" y="3" width="18" height="18" fill="#a6d4f6" stroke="#234" />{l("M3 9l6-6M3 15L15 3M3 21L21 3M9 21L21 9", "#2f86d8")}<path d="M9 18v-3h5V7h4v11z" fill="#fff" stroke={N} strokeWidth="1.300" /></>),
  ha2: (<><circle cx="12" cy="12" r="9.500" fill="#a6d4f6" stroke="#4d90d0" />{l("M4 7l14 14M8 3l13 13M3 15L15 3M6 20L20 7", "#2f86d8")}<path d="M9 18v-3h5V8h4v10z" fill="#fff" stroke={N} strokeWidth="1.300" /></>),
  ha3: hatch,
  ha4: (<>{burst(5, 5, 4)}{burst(11, 11, 4)}{burst(18, 17, 4)}{l("M3 3l18 18", "#2f86d8", 2)}</>),
  ha5: (<>{hatch}{t("?", 11, 20, "#a010a0", 20)}</>),
  ha6: (<><path d="M9 9l3-6h8l2 6zM2 21l3-6h8l2 6z" fill="#a9cdf5" stroke="#456" />{upArrow(20, 14)}</>),
  ha7: (<>{hatch}{l("M22 2L11 14", "#555", 5)}{l("M22 2L11 14", "#e5d36a", 3.500)}{l("M11 13l-2 4", N, 2)}</>),
  ha8: (<>{hatch}{redX(9, 14, 7)}</>),
  tg1: (<>{l("M3 3h6v18H3zM3 7h6M3 10h6M3 13h6M3 17h6", K)}{l("M9 5l5 8", "#888")}{tag(16, 15, B, "1")}</>),
  tg2: (<>{tag(16, 8, B, "2")}{tag(7, 17, "#555", "1")}{l("M3 10q1-6 7-5M8 2l3 3-3 3", N)}</>),
  tg3: (<>{l("M3 7l6 5", "#888")}{tag(10, 15, B, "1")}{t("?", 15, 12, "#a010a0", 15)}</>),
  tg4: (<>{tag(16, 6, B, "2")}{tag(7, 17, "#555", "1")}<path d="M11 12l6 5 6-5v4l-6 6-6-6z" fill="#c98a30" /><path d="M12 19l5 3 5-3" stroke="#69b" fill="none" strokeWidth="2" /></>),
  tg5: (<>{l("M3 3h6v18H3zM3 7h6M3 10h6M3 13h6M3 17h6", K)}{tag(16, 15, B, "1")}{redX(15, 12, 7)}</>),
  tx1: t("A", 4, 20, "#a01818", 23),
  tx2: (<>{t("A", 12, 14, "#a01818", 14)}{l("M12 12l-6 6h-3M3 18l4-2M3 18l4 1", "#a01818", 1.300)}</>),
  tx3: (<>{t("A", 3, 21, "#a01818", 12)}{t("B", 13, 10, B, 12)}{upArrow(18, 13)}</>),
  tx4: (<>{t("ABC", 0, 10, "#a01818", 11)}{l("M6 17l4 4 8-8", "#777", 2.500)}</>),
  tx5: (<>{t("C", 1, 21, "#a01818", 22)}{t("C", 16, 9, "#a01818", 11)}{upArrow(21, 13)}</>),
  tx6: (<>{t("?", 8, 11, "#a010a0", 14)}{t("ABC", 0, 22, "#a01818", 11)}</>),
  tx7: (<>{t("A", 3, 21, "#a01818", 12)}{t("A", 13, 10, "#a01818", 12)}{upArrow(16, 13)}</>),
  tx8: (<>{t("A", 2, 22, "#a01818", 12)}<text x="10" y="11" fontSize="13" fontStyle="italic" fill={B} fontFamily="Liberation Serif">A</text>{upArrow(16, 13)}</>),
  tx9: (<>{t("1", 5, 11, "#a01818", 11)}{l("M12 10v12M6 16h12M10 16l2-2 2 2-2 2z", "#a01818")}</>),
  tx10: (<>{t("A1A", 0, 9, "#a01818", 10)}{t("A2A", 5, 22, "#a01818", 10)}</>),
  tx11: (<>{t("A1", 1, 10, "#a01818", 11)}{t("A1", 11, 20, B, 11)}{l("M2 12h10M12 22h10", K, 1, "none", "2 1")}</>),
  tx12: (<>{t("A1", 1, 10, "#a01818", 11)}{t("A2", 11, 20, B, 11)}{l("M2 12h10M12 22h10", K, 1, "none", "2 1")}</>),
  tx13: (<>{box(2.5, 4.500, 19, 15, N, "1.500 1")}{t("ABC", 3, 15.500, "#a01818", 9)}</>),
  tx14: (<>{box(3, 2, 18, 5, N, "1.500 1.500")}{l("M4 12h17", B, 1.3, "none", "4 2")}{l("M4 17h17", N, 1.3, "none", "4 2")}</>),
  st1: (<>{burst(12, 12, 9)}{o(12, 12, 2)}</>),
  st2: (<>{burst(6, 5, 4, "#777")}{burst(17, 5, 4, "#777")}{burst(6, 15, 4)}{burst(17, 15, 4)}</>),
  st3: (<>{burst(16, 6, 5)}{burst(7, 15, 5)}{l("M16 12v6", N)}</>),
  st4: (<>{burst(9, 13, 6)}{o(18, 4, 3, N, "none", 1.600)}</>),
  st5: (<>{burst(9, 13, 6)}{t("?", 14, 11, "#a010a0", 14)}</>),
  st6: (<>{l("M4 20L20 3M13 4l7-1v7", B, 1.500)}</>),
  st7: (<>{burst(6, 5, 4)}{burst(12, 5, 4)}{burst(18, 5, 4)}{l("M12 12v8", N)}</>),
  meas: (<>{l("M4 7h16", B, 1, "none", "2 1")}{o(4, 7)}{o(20, 7)}{box(3, 15, 18, 5, "#8a7a20", undefined, "#f4dc5a")}{l("M6 15v2M9 15v3M12 15v2M15 15v3M18 15v2", "#6b5c10", 0.8)}</>),
  delX: redX(12, 11, 9),
  d1: (<>{l("M12 2v20M2 12h20", "#1a50c0", 1.500)}{o(12, 12, 5, "#1a50c0", "none", 1.300)}{o(12, 12, 1.5, "#1a50c0", "#1a50c0")}</>),
  d2: box(6, 8, 12, 9, "#1f5ad0", undefined, "#f4f8ff"),
  d3: l("M4 16l5-8h12l-5 8z", "#1f5ad0", 1.4, "#f4f8ff"),
  d4: o(12, 12, 6.5, "#1f5ad0", "#f4f8ff", 1.300),
  d5: l("M7 18L17 7", "#777", 1.300),
  e1: (<>{burst(10, 10, 8, "#666")}<path d="M11 10l3 1 5 4-2 6h-4z" fill="#fff" stroke="#2860b0" /></>),
  e2: l("M10 6h4v4h4v4h-4v4h-4v-4H6v-4h4z", "#1f5ad0", 1.3, "#fff"),
  e3: box(6, 10.500, 12, 3, "#1f6ad8", undefined, "#cfe4ff"),
  e4: (<>{box(6.5, 6.500, 11, 11, "#1f5ad0", undefined, "#fff")}<path d="M18 6v12H6z" fill="#1f5ad0" /></>),
  e5: (<>{globe(11, 11, 7)}<path d="M12 10l3 2 4 3-2 6h-4z" fill="#fff" stroke="#2860b0" /></>),
  dis: (<><rect x="7" y="7" width="10" height="10" fill="#7da6e4" stroke="#20407c" strokeWidth="1.500" />{l("M6 6l12 12", "#556", 1.5)}<circle cx="12" cy="12" r="9" fill="none" stroke="#e58c8c" strokeWidth="2.600" /></>),
  dcur: (<><rect x="3" y="1" width="15" height="15" fill="#c3c3c3" stroke="#aaa" />{cursor(9, 6, "#6a6a6a")}</>),
  tb1: pages(4, 4, "#fafafa", "#555"),
  tb3: (<>{l("M3 5h18", N, 1.4, "none", "4 2")}{l("M3 9.500h18", N, 1.8)}{l("M3 14h18", N, 1.5, "none", "2 2")}{l("M3 19h18", N, 1.5, "none", "1 2")}</>),
  tc1: (<>{l("M4 12l6-7M9 16v-5l7-7", K, 1.3)}{o(17, 17, 3, K, "none", 1.300)}</>),
  tc2: (<>{l("M6 4v10M10 4v12M18 4v14", K, 1, "none", "1 1")}{l("M6 15h4l4 4h5", K, 1.500)}</>),
  dv1: (<><path d="M8 16h14V9M6 12h12V6" stroke="#6c7090" fill="none" strokeWidth="1.500" />{box(2.5, 2.500, 13, 10, "#667", undefined, "#fdfdff")}{l("M16 20h6v-6M12 16v4h10", "#6c7090", 1.400)}</>),
  dv2: (<>{box(2.5, 2.500, 15, 12, "#667", undefined, "#fff")}{l("M2 2.500h16", "#556", 1.500)}{burst(9, 8, 4, "#a89018")}{cursor(9, 8)}</>),
  lv1: (<>{pages(5, 2, "#f4f4f4", "#555")}{cursor(1, 6)}</>),
  lv2: (<>{l("M6 4v16M6 10h11M6 15h11M6 20h11M6 4h9", "#555", 1.1)}{o(6, 4, 1.2, N, N)}{o(12, 10, 1.2, N, N)}{o(12, 15, 1.2, N, N)}{o(12, 20, 1.2, N, N)}</>),
  filt: l("M4 3h3l7 6h7v7h-7l-7 6H4z", "#2a70d8", 1.4, "#eef6ff"),
  hand: (<>{box(2, 4, 19, 15, "#a88", undefined, "#fff")}{l("M2 5h19", "#e8a04c", 2)}<path d="M4 15q5-6 9-5l6 1v3q-8 3-12 2z" fill="#c8c0b8" stroke="#555" /><path d="M18 10h4v5h-4z" fill="#2a8ae8" /></>),
  roll: (<path d="M7 4h10q3 3-1 6v6q3 0 2 4H8q-4-1-1-4h2v-6H7q-3-3 0-6z" fill="#eee" stroke="#888" />),
  house: (<><path d="M6 12v9h12v-9z" fill="#f4e8d0" stroke="#997" /><path d="M2 13L12 3l10 10-3 1-7-7-7 7z" fill="#f29a1c" stroke="#b5670a" /><path d="M11 15h4v6h-4z" fill="#2a50b0" /></>),
  lock: (<>{l("M8 11V7q4-5 8 0v4", "#666", 1.8)}<rect x="4" y="11" width="16" height="9" fill="#b5b52a" stroke="#5c5c10" /></>),
  shield: (<><path d="M4 5l12-2 4 2v13l-8 4-8-4z" fill="#e8e8e8" stroke="#888" /><path d="M8 8h8v8H8z" fill="#fff" stroke="#777" /></>),
};

const Svg = ({ n, className = "size-6" }: { n: string; className?: string }) => (
  <svg viewBox="0 0 24 24" fill="none" className={`shrink-0 ${className}`}>
    {icons[n]}
  </svg>
);
const I = ({ n, w = "w-[28.100px]", s = "size-6" }: { n: string; w?: string; s?: string }) => (
  <span className={`flex shrink-0 items-center justify-center ${w}`}>
    <Svg n={n} className={s} />
  </span>
);
const Icons = ({ names, w, s }: { names: string; w?: string; s?: string }) => (
  <>{names.split(" ").map((n, i) => <I key={i} n={n} w={w} s={s} />)}</>
);
const Tri = ({ w = "w-[18px]", c = "border-t-black" }: { w?: string; c?: string }) => (
  <span className={`flex shrink-0 justify-center ${w}`}>
    <span className={`border-x-4 border-t-[5px] border-x-transparent ${c}`} />
  </span>
);
const Sep = () => (
  <span className="flex h-[29px] w-[5.500px] shrink-0 justify-center">
    <span className="w-px bg-[#9a9a9a]" />
  </span>
);
const Grip = () => (
  <span className="ml-[2px] mr-[4px] h-[20px] w-[2px] shrink-0 bg-[repeating-linear-gradient(180deg,#a2a2a2_0_2px,transparent_2px_4px)]" />
);
const Group = ({ w, children }: { w: string; children: React.ReactNode }) => (
  <div className={`flex h-full shrink-0 items-center rounded-[3px] bg-gradient-to-b from-[#fdfdfd] via-[#efefef] to-[#d5d5d5] ${w}`}>
    <Grip />
    {children}
  </div>
);
const Num = ({ s, w, c = "text-black" }: { s: string; w: string; c?: string }) => (
  <span className={`shrink-0 text-center text-[12px] ${w} ${c}`}>{s}</span>
);
const Combo = ({ label, className }: { label: React.ReactNode; className: string }) => (
  <div className={`flex shrink-0 items-center justify-between rounded-[3px] border border-[#707070] bg-gradient-to-b from-[#f4f4f4] to-[#d4d4d4] pl-[3px] text-[11px] tracking-[-0.300px] text-black ${className}`}>
    <span className="flex items-center gap-1 whitespace-nowrap">{label}</span>
    <Tri />
  </div>
);

const PinIcon = ({ dbl }: { dbl?: boolean }) => (
  <svg viewBox="0 0 12 14" className="h-[14px] w-3" fill="none" stroke="#3c4650" strokeWidth="1.200">
    {dbl ? <path d="M3 1h3v6H3zM1 8h6M4.500 8v4M7 3h3v7H5M8 10v3" /> : <path d="M4 1h5v6H4zM8 1v6M2 7.500h9M6.500 8v5" />}
  </svg>
);
const CloseIcon = () => (
  <svg viewBox="0 0 12 12" className="size-3" stroke="#3c4650" strokeWidth="2"><path d="M1 1l10 10M11 1L1 11" /></svg>
);
const PanelHead = ({ title, dbl, className }: { title: string; dbl?: boolean; className: string }) => (
  <div className={`flex shrink-0 items-center bg-gradient-to-b from-[#c9d8ea] to-[#e6f2fb] pl-[3px] font-["Open_Sans"] text-[11px] text-[#566575] ${className}`}>
    <span className="flex-1">{title}</span>
    <span className="flex items-center gap-[4px] pr-[3px]">
      <Tri w="w-[12px]" c="border-t-[#3c4650]" />
      {dbl && <PinIcon dbl />}
      <PinIcon />
      <CloseIcon />
    </span>
  </div>
);

const WinGlyph = ({ kind }: { kind: string }) => (
  <svg viewBox="0 0 14 12" className="h-3 w-[14px]" fill="none">
    {kind === "min" && <rect x="2" y="7" width="10" height="3" fill="#fff" stroke="#444b55" />}
    {kind === "max" && <><rect x="5" y="1.500" width="7" height="7" fill="#fff" stroke="#444b55" /><rect x="2" y="4" width="7" height="7" fill="#fff" stroke="#444b55" /><rect x="4.500" y="6.500" width="2" height="2" stroke="#444b55" /></>}
    {kind === "x" && <><path d="M3 2l8 8M11 2l-8 8" stroke="#444b55" strokeWidth="4" /><path d="M3 2l8 8M11 2l-8 8" stroke="#fff" strokeWidth="2.400" /></>}
  </svg>
);

const menus: [string, string, string][] = [
  ["", "F", "ile"], ["", "E", "dit"], ["E", "l", "ement"], ["", "S", "ettings"], ["", "T", "ools"],
  ["", "U", "tilities"], ["Wor", "k", "space"], ["", "W", "indow"], ["", "H", "elp"],
];

const sections: [string, string, string][] = [
  ["Q", "h-[58px]", "pl1 pl2 pl3 pl4 pl5 pl6 pl7 pl8 pl9 pl10"],
  ["W", "h-[30px]", "po1 po2 po3 po4"],
  ["E", "h-[58px]", "ci1 ci2 ci3 ci4 ci5 ci6 ci7 ci8"],
  ["R", "h-[58px]", "ha1 ha2 ha3 ha4 ha5 ha6 ha7 ha8"],
  ["T", "h-[30px]", "tg1 tg2 tg3 tg4 tg5"],
  ["A", "h-[58px]", "tx1 tx2 tx3 tx4 tx5 tx6 tx7 tx8 tx9 tx10 tx11 tx12 tx13 tx14"],
  ["", "h-[30px]", "st1 st2 st3 st4 st5 st6 st7"],
];

const ScrollBar = ({ thumb, className }: { thumb: string; className: string }) => (
  <div className={`flex shrink-0 flex-col items-center bg-[#f0f0f0] ${className}`}>
    <span className="flex h-[18px] items-center"><span className="border-x-[3.500px] border-b-4 border-x-transparent border-b-[#333]" /></span>
    <span className={`flex w-full items-center justify-center rounded-[2px] border border-[#8f8f8f] bg-gradient-to-r from-[#f6f6f6] to-[#cdcdd0] ${thumb}`}>
      <span className="h-[8px] w-[7px] bg-[repeating-linear-gradient(180deg,#555_0_1px,transparent_1px_3px)]" />
    </span>
    <span className="flex-1" />
    <span className="flex h-[18px] items-center"><span className="border-x-[3.500px] border-t-4 border-x-transparent border-t-[#333]" /></span>
  </div>
);

const types = ["Annotation Cell", "Arc", "Associative Region", "B-spline Curve", "B-spline Surface", "Cell", "Complex Chain", "Complex Shape", "Cone", "Curve", "Detail Callout", "Detail Callout 2D View"];
const levels = ["Bottom Pole", "Cover_Catch basin", "Cover_manhole", "Cover_Valve", "Fire hydrant", "ImagePoint", "Default", "-check", "154", "Client cover", "Cover_Other", "Far-inaccurate measuring cover", "FOSSE", "Invisible", "obstacle-Inaccurate measuring c...", "Red Quality"];

// Each marker: left and top of its body in window pixels, the colour of the symbol behind it, and that symbol's radius.
const P = "#5c1663", O = "#d98227", G = "#4a4a28", V = "#8b0a8b", D = "#06066b", RD = "#e8121c";
const markers: [number, number, string, number?][] = [
  [593, 174, P], [629, 174, P], [611, 287, ""], [604, 286, G], [583, 299, O], [623, 360, D, 6], [637, 361, RD],
  [583, 499, O], [590, 566, P], [630, 570, P], [614, 585, G], [607, 591, G], [762, 569, "#f08010", 7.5], [761, 584, D, 6],
  [922, 275, G], [915, 281, G], [930, 297, D, 6], [945, 298, RD], [900, 311, P], [934, 310, V, 7],
  [943, 552, O], [918, 581, G], [896, 596, G], [915, 601, G], [909, 607, G],
  [1253, 763, O], [1199, 774, P], [1233, 830, D], [1251, 832, RD], [1229, 882, G], [1246, 891, P], [1182, 896, V, 6],
  [1198, 908, G], [1181, 913, G], [1186, 919, ""], [1222, 915, G], [1201, 931, P], [1247, 939, P], [1324, 893, V], [1311, 940, V, 7],
  [1204, 154, P], [1252, 179, P], [1258, 232, O], [1203, 248, P], [1255, 258, RD], [1250, 291, P], [1225, 297, G],
  [1250, 401, P], [1203, 420, P], [1249, 499, P], [1248, 604, P], [1225, 607, O], [1200, 622, P], [886, 756, O],
  [929, 803, V, 6], [919, 807, ""], [940, 813, RD], [689, 883, O], [688, 901, D, 6], [749, 882, O],
  [602, 892, P], [600, 909, G], [594, 919, G], [606, 927, G], [584, 953, V, 6], [621, 953, V, 6],
  [918, 891, G], [912, 914, G], [905, 921, G], [1068, 886, G],
];

const LevelV8 = ({ on }: { on?: boolean }) => (
  <span className={`flex size-[14px] shrink-0 items-center justify-center text-[11px] font-bold leading-none tracking-[-1px] ${on ? "bg-[#2f6fd8] text-white" : "border border-[#cfcfcf] bg-[#f2f2f2] text-[#9a9a9a]"}`}>v8</span>
);

const Field = ({ icon, value, w }: { icon: React.ReactNode; value: string; w: string }) => (
  <>
    <span className={`flex shrink-0 justify-center ${w}`}>{icon}</span>
    <span className="flex h-[17px] w-[90px] shrink-0 items-center border border-[#8a8a8a] bg-white pl-1 text-[11px] tracking-[-0.200px] text-[#777]">{value}</span>
  </>
);

const Cell = ({ w, children }: { w: string; children?: React.ReactNode }) => (
  <span className={`flex h-[24px] shrink-0 items-center justify-center border-l border-t border-[#9a9a9a] ${w}`}>{children}</span>
);

export default function App() {
  return (
    <div className='flex h-[1040px] w-[1920px] flex-col overflow-hidden bg-[#efefef] font-["Liberation_Sans",sans-serif] text-[11px] text-black'>
      {/* Title bar */}
      <div className="flex h-[20px] shrink-0 items-center border-b border-[#2b3a48] bg-[radial-gradient(ellipse_30px_26px_at_560px_6px,#7aa0c0,transparent),radial-gradient(ellipse_40px_30px_at_715px_14px,#7aa8d4,transparent),radial-gradient(ellipse_50px_24px_at_785px_6px,#24394e,transparent),radial-gradient(ellipse_40px_16px_at_1500px_4px,#2f4f6b,transparent),radial-gradient(ellipse_60px_20px_at_630px_4px,#1d2f42,transparent),radial-gradient(ellipse_90px_18px_at_1250px_16px,#d2fdff,transparent),radial-gradient(ellipse_60px_18px_at_950px_6px,#c4f6ff,transparent),linear-gradient(90deg,#9fb4c4_0,#b4c4d0_320px,#8fa6ba_410px,#4c6c8a_500px,#4a7094_690px,#3d6285_830px,#7fc4e8_875px,#9be6f6_960px,#a8f0fa_1180px,#8fe0f4_1290px,#5fa8d4_1400px,#5d9dc8_1540px,#7fa9c9_1640px,#6c93b2_1800px,#5f86a8_1920px)]">
        <svg viewBox="0 0 16 18" className="h-[18px] w-4 shrink-0"><rect width="16" height="18" fill="#0f4468" /><path d="M2 16L6 4l-1 7q2 3 5-2l2-6-1 9q1 2 3-1" stroke="#e4f4fc" strokeWidth="1.600" fill="none" /></svg>
        <span className='ml-[5px] w-[345px] whitespace-nowrap font-["Open_Sans"] text-[12px] tracking-[-0.140px] text-black'>part 249.dgn [3D - V8 DGN] - MicroStation V8i (SELECTseries 3)</span>
        <div className="ml-auto mr-[3px] flex h-[17px] self-start rounded-b-[4px] border border-t-0 border-[#3d5468] bg-white/15">
          <span className="flex w-[28px] items-center justify-center border-r border-[#3d5468]"><WinGlyph kind="min" /></span>
          <span className="flex w-[26px] items-center justify-center border-r border-[#3d5468]"><WinGlyph kind="max" /></span>
          <span className="flex w-[47px] items-center justify-center"><WinGlyph kind="x" /></span>
        </div>
      </div>

      {/* Menu */}
      <div className="flex h-[24px] shrink-0 items-center gap-[14px] bg-[#f0f0f0] pt-[4px] pl-[2px] text-[11px] tracking-[-0.320px]">
        <span className="-mr-[2px] h-[8px] w-[2px] bg-[repeating-linear-gradient(180deg,#a2a2a2_0_2px,transparent_2px_4px)]" />
        {menus.map(([a, u, b]) => (
          <span key={u + b}>{a}<span className="underline">{u}</span>{b}</span>
        ))}
      </div>

      {/* First toolbar row */}
      <div className="flex h-[33px] shrink-0 gap-[3px]">
        <Group w="w-[548px]">
          <I n="level" w="w-[28px]" /><Tri w="w-[20px]" /><Sep />
          <Combo label="Default" className="h-[20px] w-[128px]" /><Sep />
          <I n="levelBox" w="w-[32px]" /><Num s="0" w="w-[18px]" /><Tri /><Sep />
          <I n="lineStyle" w="w-[28px]" /><Num s="0" w="w-[20px]" /><Tri /><Sep />
          <I n="weight" w="w-[26px]" s="size-5" /><Num s="12" w="w-[22px]" /><Tri /><Sep />
          <I n="color" w="w-[26px]" /><Num s="0" w="w-[21px]" /><Tri /><Sep />
          <I n="prio" w="w-[26px]" /><Num s="0" w="w-[21px]" c="text-[#888]" /><Tri c="border-t-[#888]" />
        </Group>
        <Group w="w-[290px]"><Icons names="scale delPart extend trimX interT hash filletR filletL curveA curveB" s="size-[23px]" /></Group>
        <Group w="w-[218px]"><Icons names="palette match1 match2 match3" s="size-[22px]" /><Sep /><I n="brush" /><Sep /><Icons names="palettes paletteBulb" /></Group>
        <Group w="w-[150px]"><Icons names="sm1 sm2 sm3 sm4 sm5" s="size-[22px]" /></Group>
        <Group w="w-[96px]"><I n="mgr" w="w-[25px]" s="size-[22px]" /><Tri /><I n="yPages" w="w-[25px]" s="size-[22px]" /><Tri /></Group>
        <Group w="w-[212px]"><Icons names="star shp1 shp2 shp3" s="size-[22px]" /><Sep /><Icons names="grid gridX target" s="size-[22px]" /></Group>
        <Group w="w-[364px]"><Icons names="copyE moveE scaleE rotE mirror array" s="size-[22px]" /><Sep /><Icons names="align alignEdge offset stretch" s="size-[22px]" /><Sep /><I n="scale" s="size-[23px]" /><Sep /><I n="star" /></Group>
      </div>

      {/* Second toolbar row */}
      <div className="mt-px flex h-[34px] shrink-0 gap-[3px] border-b border-[#3c3c3c]">
        <Group w="w-[451px]">
          {["cubeBtn", "prefs", "brain", "raster", "mgr", "yPages", "acc"].map((n) => (
            <React.Fragment key={n}><I n={n} w="w-[25px]" s="size-[22px]" /><Tri w="w-[18px]" /></React.Fragment>
          ))}
          <I n="info" w="w-[26px]" s="size-[22px]" /><I n="tree" w="w-[33px]" s="size-[22px]" /><I n="folders" s="size-[23px]" w="w-[24px]" /><I n="cells" /><I n="cross" />
        </Group>
        <Group w="w-[360px]">
          <I n="gR" w="w-[14px]" /><I n="gRM" w="w-[50px]" /><I n="gM" w="w-[10px]" /><I n="gRS" w="w-[38px]" /><I n="gRxS" w="w-[20px]" /><I n="gD" w="w-[32px]" /><I n="gDS" w="w-[24px]" />
          <Icons names="barBoxR barBox upBars upOne upV3 up1V3" w="w-[27.200px]" />
        </Group>
        <Group w="w-[348px]">
          <Icons names="newF open save" s="size-[22px]" /><Sep /><I n="print" w="w-[28px]" /><Sep /><Icons names="cut copy paste" s="size-[22px]" /><Sep /><Icons names="undo redo" s="size-[22px]" /><Sep /><I n="globeBook" s="size-[22px]" /><Sep /><I n="help" w="w-[27px]" />
        </Group>
        <Group w="w-[38px]"><I n="google" /></Group>
        <Group w="w-[246px]"><I n="rotV" s="size-[22px]" /><Sep /><Icons names="cu1 cu2 cu3 cu4" /><Sep /><Icons names="cu5 cu6 cu7" /></Group>
        <Group w="w-[226px]"><I n="page" s="size-[22px]" /><Tri w="w-[16px]" /><Sep /><I n="pageAdd" s="size-[22px]" /><Icons names="pageCut pageClip" s="size-[22px]" /><I n="pageMag" w="w-[30px]" s="size-[22px]" /><Icons names="tr1 tr2" w="w-[26px]" s="size-[22px]" /></Group>
        <Group w="w-[207px]"><Icons names="palette match1 match2 match3 brush palettes paletteBulb" s="size-[22px]" /></Group>
      </div>

      {/* Work area */}
      <div className="flex h-[866px] shrink-0">
        {/* Left docks */}
        <div className="flex w-[276px] shrink-0 border-r-[6px] border-[#b0b0dc]">
          <div className="flex w-[270px] flex-col">
            <PanelHead title="Tasks" dbl className="h-[18px] w-[269px]" />
            <div className="mx-[5px] mt-[7px] flex h-[25px] w-[262px] shrink-0 items-center rounded-[3px] border border-[#777] bg-white">
              <svg viewBox="0 0 16 16" className="ml-1 size-[15px]"><path d="M3 6l5-4 5 3-1 8-7 1z" fill="#7fb4e8" stroke="#4d78ac" /><path d="M2 12q5-5 12-1l-5 4z" fill="#cfe2f6" stroke="#6d93bd" /></svg>
              <span className='ml-1 flex-1 font-["Open_Sans"] text-[11px] tracking-[0.300px]'>Tasks</span>
              <span className="flex h-full items-center border-l border-[#999]"><Tri w="w-[24px]" /></span>
            </div>
            <div className="mt-px h-px shrink-0 bg-[#888]" />
            <div className="mx-[4px] mt-[3px] flex h-[35px] w-[262px] shrink-0 items-center rounded-[3px] bg-white pl-[5px]">
              {"arrowSel fence copyE fit palette star scale delX meas".split(" ").map((n, i) => (
                <span key={n} className={`relative flex h-[28px] w-[28px] justify-center ${i === 0 ? "border border-[#5a6f94] bg-gradient-to-b from-[#fbd08c] to-[#f8a848]" : ""}`}>
                  <Svg n={n} className={i === 0 ? "size-[22px]" : "mt-[2px] size-[21px]"} />
                  <span className="absolute bottom-0 left-0 h-[12px] w-[12px] border-b border-r border-[#444] bg-white/60 pl-[2px] text-[11px] leading-[11px] text-[#666]">{i + 1}</span>
                  {i > 0 && i !== 7 && <span className="absolute bottom-[2px] right-0 border-y-[2.500px] border-l-[3px] border-y-transparent border-l-black" />}
                </span>
              ))}
            </div>
            <div className="mt-[4px] flex h-[337px] shrink-0">
              <div className="ml-[4px] mr-[4px] flex w-[244px] flex-col overflow-hidden bg-white">
                <div className="flex h-[24px] shrink-0 items-center bg-gradient-to-b from-[#e9f7fe] to-[#a9dcf6] pl-[4px] pr-[7px]">
                  <Svg n="pl1" className="size-[16px]" />
                  <span className='ml-[6px] flex-1 font-["DejaVu_Sans"] text-[11px] font-bold tracking-[-0.300px] text-[#111]'>Drawing</span>
                  <span className="grid grid-cols-2 gap-[2px]">{[0, 1, 2, 3].map((k) => <span key={k} className="h-[5px] w-[5px] bg-[#223a4c]" />)}</span>
                  <span className="ml-[6px] flex w-[13px] flex-col gap-[2px]">{[0, 1, 2].map((k) => <span key={k} className="h-[2px] bg-[#223a4c]" />)}</span>
                  <span className="ml-[4px] flex h-[17px] w-[16px] flex-col justify-center gap-[2px] border border-[#888] bg-white/70 px-px"><span className="h-[4px] bg-[#223a4c]" /><span className="h-[4px] bg-[#223a4c]" /></span>
                  <svg viewBox="0 0 12 10" className="ml-[4px] h-[10px] w-3"><path d="M2 8l4-4 4 4" stroke="#223a4c" strokeWidth="3" fill="none" /></svg>
                </div>
                <div className="mt-[2px] flex flex-col">
                  {sections.map(([k, h, names], i) => (
                    <div key={i} className={`flex shrink-0 ${h}`}>
                      <span className='mb-[2px] ml-[5px] flex w-[15px] items-center justify-center bg-gradient-to-r from-[#f4f2f6] to-[#d8d4de] font-["Open_Sans"] text-[13px] text-[#888]'>{k}</span>
                      <span className="mb-[1px] flex w-[219px] flex-wrap content-start border-b border-[#9a9a9a] pl-px pt-px">
                        {names.split(" ").map((n) => (
                          <span key={n} className="flex h-[28px] w-[28px] items-center justify-center"><Svg n={n} className="size-[22px]" /></span>
                        ))}
                      </span>
                    </div>
                  ))}
                </div>
              </div>
              <ScrollBar className="w-[15px]" thumb="h-[150px]" />
            </div>
            <div className="mt-[4px] h-[6px] shrink-0 bg-[#b0b0dc]" />
            <PanelHead title="Element Selection" dbl className="h-[20px] w-[269px]" />
            <div className="mt-[8px] flex shrink-0">
              <div className="ml-[23px] flex w-[109px] flex-col gap-[2px]">
                {["d1 d2 d3 d4 d5", "e1 e2 e3 e4 e5"].map((row) => (
                  <div key={row} className="flex h-[25px] items-center border-l border-t border-[#999] pl-[2px]">
                    {row.split(" ").map((n, i) => (
                      <span key={n} className={`mr-px flex h-[20px] w-[20px] items-center justify-center ${i === 0 ? "border border-[#5a6f94] bg-[#fcc878]" : ""}`}><Svg n={n} className="size-[20px]" /></span>
                    ))}
                  </div>
                ))}
              </div>
              <div className="ml-[16px] flex flex-col gap-[4px] pt-[2px]"><Svg n="dis" /><Svg n="dcur" /></div>
              <span className="ml-[16px] mt-[46px] h-0 border-x-[4.500px] border-b-[5px] border-x-transparent border-b-black" />
            </div>
            <div className="relative mt-[9px] h-[264px] shrink-0">
              <div className="absolute left-[23px] top-[19px] h-[224px] w-[180px] border-b border-r border-[#999]" />
              <div className="ml-[23px] flex h-[20px] gap-[2px]">
                {["tb1", "rainbow", "tb3", "weight"].map((n) => (
                  <span key={n} className="flex w-[43px] items-center justify-center border border-b-0 border-[#999] bg-gradient-to-b from-[#f4f4f4] to-[#cfcfcf]">
                    {n === "rainbow" ? <span className="size-[15px] border border-[#335] bg-[linear-gradient(135deg,#f8a0f0,#8080ff_30%,#60e8f0_50%,#a0f080_65%,#f8e060_80%,#f08060)]" /> : <Svg n={n} className="size-[15px]" />}
                  </span>
                ))}
              </div>
              <div className="relative ml-[16px] flex h-[20px] gap-px">
                <span className="flex w-[60px] items-center justify-center border-l border-t border-[#999] bg-white"><Svg n="tc1" className="size-[17px]" /></span>
                <span className="flex w-[57px] items-center justify-center border border-b-0 border-[#999] bg-gradient-to-b from-[#f4f4f4] to-[#cfcfcf]"><Svg n="tc2" className="size-[17px]" /></span>
                <span className="flex w-[61px] items-center justify-center border border-b-0 border-[#999] bg-gradient-to-b from-[#f4f4f4] to-[#cfcfcf]"><Svg n="level" className="size-[16px]" /></span>
              </div>
              <div className="relative ml-[16px] h-[222px] w-[182px] border border-t-0 border-[#8a8a8a] bg-[#f0f0f0] px-[6px] pt-[7px]">
                <div className="flex h-[208px] w-[169px] border-2 border-[#8a8a8a] bg-white">
                  <div className="flex w-[148px] flex-col overflow-hidden">
                    <div className="mb-[3px] flex h-[21px] shrink-0 border-b border-[#555] bg-gradient-to-b from-white to-[#f1f2f4]">
                      <span className="w-[119px] border-r border-[#ddd] pl-[5px] pt-[2px] tracking-[-0.200px]">Element Type</span>
                      <span className="ml-[13px] mt-[3px] h-0 border-x-[3.500px] border-t-4 border-x-transparent border-t-[#5fa8c8]" />
                    </div>
                    {types.map((s) => <span key={s} className="h-[15px] shrink-0 whitespace-nowrap pl-[4px] leading-[15px] tracking-[-0.200px]">{s}</span>)}
                  </div>
                  <ScrollBar className="w-[15px]" thumb="h-[37px]" />
                </div>
              </div>
            </div>
          </div>
        </div>

        {/* View window */}
        <div className="flex w-[1369px] shrink-0 flex-col bg-black">
          <div className="flex h-[30px] shrink-0 items-center bg-gradient-to-b from-[#9fb9d8] to-[#b8d0ea] pl-[3px] pr-[2px]">
            <svg viewBox="0 0 16 16" className="mt-[4px] size-[15px]"><rect width="16" height="16" rx="2" fill="#e9f4fd" /><path d="M3 5l6-2 4 1v7l-5 2-5-1z" fill="#1a90e8" /><path d="M8 6l5-2v7l-5 2z" fill="#0c62c0" /></svg>
            <span className='ml-[8px] mt-[6px] flex-1 font-["Open_Sans"] text-[11px] tracking-[0.180px]'>View 1 - Top, Default [Displayset]</span>
            <div className="mt-[6px] flex gap-[2px]">
              <span className="flex h-[17px] w-[31px] items-center justify-center rounded-[2px] border border-[#5f7590] bg-gradient-to-b from-[#d4e1f0] to-[#9fb8d4]"><WinGlyph kind="min" /></span>
              <span className="flex h-[17px] w-[31px] items-center justify-center rounded-[2px] border border-[#5f7590] bg-gradient-to-b from-[#d4e1f0] to-[#9fb8d4]"><WinGlyph kind="max" /></span>
              <span className="flex h-[17px] w-[31px] items-center justify-center rounded-[2px] border border-[#5c1a14] bg-gradient-to-b from-[#e8988c] to-[#c03a28]"><WinGlyph kind="x" /></span>
            </div>
          </div>
          <svg viewBox="276 142 1369 836" className="h-[836px] w-[1369px]" shapeRendering="crispEdges">
            {markers.map(([x, y, c, r], i) => (
              <g key={i} transform={`translate(${x} ${y})`}>
                {c && r && <circle cx="-1.500" cy="7" r={r} fill={c} />}
                {c && !r && <path d="M-4 7q0-4 4-5v5z" fill={c} />}
                <path d="M0 0h17v3h2v1h2v1h2v1h-3v1h-2v1h-1v5H0V9h-4V8h-2V7h3V6h3z" fill="#fff" />
              </g>
            ))}
            <circle cx="891" cy="309" r="4" fill="#e89030" />
            <path d="M893 307h14v2h-2v3h-14v-2h2z" fill="#fff" />
            <path d="M614 290q-6-1-6 3t6 4" stroke="#4a4a28" strokeWidth="2" fill="none" />
            <path d="M758 578v-3l3-2h1v4z" fill="#e8121c" />
            <circle cx="1274" cy="435" r="4.500" fill="#222" stroke="#888" />
          </svg>
        </div>

        {/* Level display dock */}
        <div className="flex w-[275px] shrink-0 flex-col border-l-[6px] border-[#b0b0dc] pb-px">
          <PanelHead title="Level Display - View 1" className="h-[19px]" />
          <div className="mt-[7px] flex h-[25px] shrink-0 items-center">
            <I n="dv1" w="w-[37px]" s="size-[22px]" /><I n="dv2" w="w-[28px]" s="size-[22px]" />
            <Combo label="View Display" className="ml-[8px] h-[16px] w-[102px]" />
          </div>
          <div className="mt-[8px] flex h-[28px] shrink-0 items-center">
            <I n="lv1" w="w-[39px]" />
            <span className="flex size-[28px] items-center justify-center border border-[#5a6f94] bg-gradient-to-b from-[#f9b860] to-[#fde0a0]"><Svg n="lv2" /></span>
            <I n="filt" w="w-[34px]" s="size-[20px]" />
            <span className="w-[30px] tracking-[-0.200px]">(none)</span><Tri w="w-[20px]" />
            <Combo label="Levels" className="ml-[2px] h-[16px] w-[54px]" />
            <I n="hand" w="w-[38px]" s="size-[23px]" /><Tri w="w-[6px]" />
          </div>
          <div className="ml-[2px] mt-[4px] flex h-[142px] w-[266px] shrink-0 flex-col border-l-2 border-t-2 border-[#7b7b7b] bg-white pl-[6px] pt-[2px] tracking-[-0.250px]">
            <span className="flex h-[18px] items-center">
              <span className="flex size-[9px] items-center justify-center border border-[#888] leading-none"><span className="h-px w-[5px] bg-[#333]" /></span>
              <span className="h-px w-[4px] bg-[#999]" />
              <LevelV8 on />
              <span className="ml-[3px] border border-[#b4d8f0] bg-[#eaf5fd] pr-px leading-[14px] tracking-[-0.100px]">part 249.dgn</span>
            </span>
            {["centerlineClientTerrebonne.dgn", "Cover -parts.dgn", "All Camposition.dgn"].map((s, i) => (
              <span key={s} className="flex h-[18px] items-center text-[#d8101c]">
                <span className={`ml-[21px] w-px self-start bg-[#999] ${i === 2 ? "h-[9px]" : "h-[18px]"}`} />
                <span className="h-px w-[9px] bg-[#999]" />
                <LevelV8 />
                <span className="ml-[4px]">{s}</span>
              </span>
            ))}
          </div>
          <div className="ml-[2px] mt-[8px] flex w-[267px] flex-1 flex-col border-l-2 border-t-2 border-[#7b7b7b] bg-white">
            <div className="mb-px flex h-[22px] shrink-0 items-center border-b-2 border-[#6a6a6a] bg-gradient-to-b from-white to-[#f0f1f3]">
              <span className="w-[171px] pl-[7px]">Name</span>
              <span className="flex h-full flex-1 items-center border-l border-[#ddd] pl-[26px] tracking-[-0.200px]">Used
                <span className="-mt-[8px] ml-[10px] border-x-[3.500px] border-t-4 border-x-transparent border-t-[#5f98b0]" />
              </span>
            </div>
            {levels.map((s, i) => (
              <div key={s} className={`mr-px flex h-[17px] shrink-0 items-center pl-[3px] ${i === 6 ? "bg-[#008080]" : "bg-[#3399ff]"} ${i < 7 ? "font-bold tracking-[0.350px] text-white" : "tracking-[-0.200px] text-[#e4f2ff]"}`}>
                <span className="flex-1 whitespace-nowrap">{s}</span>
                {i < 6 && <span className="mr-[45px] size-[5px] rounded-full bg-white" />}
              </div>
            ))}
          </div>
        </div>
      </div>

      {/* View and snap toolbars */}
      <div className="flex h-[34px] shrink-0 gap-[2px] border-b border-[#aaa]">
        <Group w="w-[520px]">
          <I n="viewAttr" w="w-[27px]" /><I n="bright" w="w-[28px]" /><Tri w="w-[16px]" /><Sep />
          <Icons names="upd zin zout zwin fit rotV pan walk fly" s="size-[23px]" /><Sep />
          <I n="vprev" /><I n="vnext" w="w-[27px]" /><Sep /><Icons names="copyV persp clip clipM" />
        </Group>
        <Group w="w-[419px]">
          <I n="back" w="w-[26px]" s="size-[22px]" /><Tri w="w-[18px]" c="border-t-[#777]" /><I n="fwd" w="w-[25px]" s="size-[22px]" /><Tri w="w-[18px]" c="border-t-[#777]" /><I n="cone" w="w-[26px]" /><Tri w="w-[16px]" c="border-t-[#777]" />
          <Combo label={<><Svg n="views" className="size-[17px]" />Default</>} className="h-[20px] w-[128px]" /><Sep />
          <I n="views" w="w-[30px]" /><Sep />
          <div className="flex h-[20px]">
            {[1, 2, 3, 4, 5, 6, 7, 8].map((k) => (
              <span key={k} className={`flex w-[14px] items-center justify-center border-r border-[#333] text-[11px] ${k === 1 ? "bg-[#fcc888]" : "bg-[#ececec]"}`}>{k}</span>
            ))}
          </div>
        </Group>
        <Group w="w-[521px]">
          <I n="yx" w="w-[30px]" /><Sep />
          <I n="sn1" s="size-[20px]" />
          <span className="flex h-[28px] w-[28px] shrink-0 items-center justify-center border border-[#3a5fa8] bg-[repeating-conic-gradient(#b08850_0_25%,#fcc878_0_50%)] bg-[length:4px_4px]"><Svg n="sn2" className="size-[20px]" /></span>
          <Icons names="sn3 sn4 sn5 sn6 sn7 sn8 sn9 sn10 sn11 sn12 sn13 sn14 sn15 sn16 sn17" s="size-[20px]" />
        </Group>
        <Group w="w-[365px]">
          <Field w="w-[22px]" icon={<Svg n="axX" className="size-[16px]" />} value="0.0000" /><Sep />
          <Field w="w-[26px]" icon={<Svg n="axA" className="size-[14px]" />} value="0.0000°" /><Sep />
          <Field w="w-[24px]" icon={<span className="text-[16px] font-bold">Z</span>} value="106.6944" />
        </Group>
      </div>

      {/* Status bar */}
      <div className="flex h-[27px] shrink-0 items-center border-b border-[#222] bg-[#f0f0f0] pl-[3px]">
        <span className="w-[389px] tracking-[-0.200px]">Element Selection &gt; Identify element to add to set</span>
        <span className="h-[20px] w-[2px] bg-[repeating-linear-gradient(180deg,#a2a2a2_0_2px,transparent_2px_4px)]" />
        <span className="ml-[4px] flex h-[24px] w-[28px] border-l border-t border-[#888] pl-[19px] pt-[2px]"><span className="h-0 border-x-[3px] border-b-4 border-x-transparent border-b-black" /></span>
        <span className="ml-auto flex gap-[2px]">
          <Cell w="w-[27px]"><Svg n="sn2" className="size-[15px]" /></Cell>
          <Cell w="w-[26px]"><Svg n="lock" className="size-[15px]" /></Cell>
          <Cell w="w-[114px]"><span className="flex-1 pl-[2px]">Default</span></Cell>
          <Cell w="w-[103px]" /><Cell w="w-[26px]" /><Cell w="w-[26px]" /><Cell w="w-[26px]" />
          <Cell w="w-[27px]"><Svg n="roll" className="size-[16px]" /></Cell>
          <Cell w="w-[26px]"><Svg n="house" className="size-[17px]" /></Cell>
          <Cell w="w-[26px]" />
          <Cell w="w-[28px]"><Svg n="shield" className="size-[16px]" /></Cell>
        </span>
      </div>
    </div>
  );
}
